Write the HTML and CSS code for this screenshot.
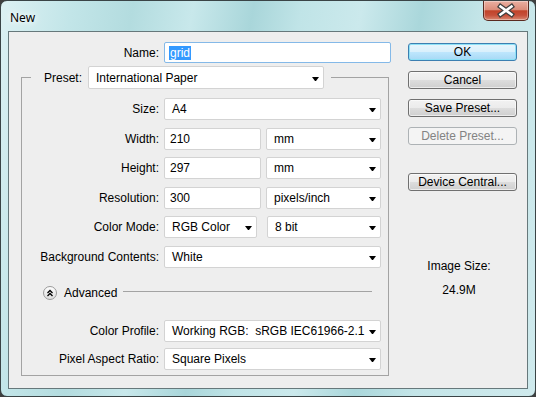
FILE: index.html
```html
<!DOCTYPE html>
<html>
  <head>
    <meta charset="utf-8">
    <title>New</title>
    <link rel="stylesheet" href="styles.css">
  </head>
  <body>
    <div class="window">
      <div class="titlebar">
        <span class="title">New</span>
        <div class="close">
          <svg width="44" height="19" viewBox="0 0 44 19">
            <path d="M16.5 5.5 L27.5 13.5 M27.5 5.5 L16.5 13.5" stroke="#3d3d3d" stroke-width="5" stroke-linecap="square"/>
            <path d="M16.5 5.5 L27.5 13.5 M27.5 5.5 L16.5 13.5" stroke="#fff" stroke-width="2.6" stroke-linecap="square"/>
          </svg>
        </div>
      </div>

      <div class="client">
        <div class="left">
          <div class="row name-row">
            <span class="lbl">Name:</span>
            <div class="field name"><span class="sel">grid</span></div>
          </div>

          <fieldset class="group">
            <legend class="preset">
              <span class="preset-lbl">Preset:</span>
              <div class="combo preset-combo">International Paper</div>
            </legend>

            <div class="rows">
              <div class="row">
                <span class="lbl">Size:</span>
                <div class="combo wide">A4</div>
              </div>
              <div class="row">
                <span class="lbl">Width:</span>
                <div class="field num">210</div>
                <div class="combo unit">mm</div>
              </div>
              <div class="row">
                <span class="lbl">Height:</span>
                <div class="field num">297</div>
                <div class="combo unit">mm</div>
              </div>
              <div class="row">
                <span class="lbl">Resolution:</span>
                <div class="field num">300</div>
                <div class="combo unit">pixels/inch</div>
              </div>
              <div class="row">
                <span class="lbl">Color Mode:</span>
                <div class="combo mode">RGB Color</div>
                <div class="combo bits">8 bit</div>
              </div>
              <div class="row">
                <span class="lbl">Background Contents:</span>
                <div class="combo wide">White</div>
              </div>
            </div>

            <div class="advanced">
              <svg class="chev" width="14" height="14" viewBox="0 0 14 14">
                <defs>
                  <linearGradient id="g" x1="0" y1="0" x2="0" y2="1">
                    <stop offset="0" stop-color="#ffffff"/>
                    <stop offset="1" stop-color="#dcdcdc"/>
                  </linearGradient>
                </defs>
                <circle cx="7" cy="7" r="6.5" fill="url(#g)" stroke="#9a9a9a"/>
                <path d="M4.5 7 L7 4.5 L9.5 7 M4.5 10 L7 7.5 L9.5 10" fill="none" stroke="#000" stroke-width="1.3"/>
              </svg>
              <span class="adv-text">Advanced</span>
              <span class="adv-line"></span>
            </div>

            <div class="rows adv-rows">
              <div class="row">
                <span class="lbl">Color Profile:</span>
                <div class="combo wide profile">Working RGB:  sRGB IEC61966-2.1</div>
              </div>
              <div class="row">
                <span class="lbl">Pixel Aspect Ratio:</span>
                <div class="combo wide">Square Pixels</div>
              </div>
            </div>
          </fieldset>
        </div>

        <div class="right">
          <div class="btn default">OK</div>
          <div class="btn">Cancel</div>
          <div class="btn">Save Preset...</div>
          <div class="btn disabled">Delete Preset...</div>
          <div class="btn device">Device Central...</div>

          <div class="info">
            <div>Image Size:</div>
            <div class="size">24.9M</div>
          </div>
        </div>
      </div>
    </div>
  </body>
</html>
```

FILE: styles.css
```css
*{
  margin: 0;
  padding: 0;
  box-sizing: border-box;
}
body{
  background-color: #3f3f3f;
  font-family: "Liberation Sans", Arial, sans-serif;
  font-size: 12px;
  color: #000;
  overflow: hidden;
}
.window{
  width: 536px;
  height: 397px;
  border: 1px solid #3a4446;
  border-radius: 7px;
  background: linear-gradient(100deg, #dcf1f3 0%, #c2e5e8 12%, #b3dcdf 22%, #c8e8eb 32%, #a9d6da 42%, #c0e4e7 50%, #cbe9ec 60%, #aad7db 70%, #c4e5e8 80%, #cfeaed 100%);
  display: flex;
  flex-direction: column;
}
.titlebar{
  height: 30px;
  display: flex;
  justify-content: space-between;
  align-items: flex-start;
  padding-left: 9px;
}
.title{
  margin-top: 10px;
  font-family: "Noto Sans", "Liberation Sans", sans-serif;
  font-size: 12px;
  line-height: 14px;
  text-shadow: 0 0 6px #fff, 0 0 10px #fff;
}
.close{
  width: 46px;
  height: 20px;
  margin-right: 6px;
  border: 1px solid #5a2a20;
  border-top: none;
  border-radius: 0 0 5px 5px;
  background: linear-gradient(#eab0a2 0%, #dc8d7a 45%, #c1432a 52%, #c6503a 75%, #d98a73 100%);
  box-shadow: inset 0 0 0 1px rgba(255,255,255,0.35);
}
.close svg{
  display: block;
}

.client{
  height: 358px;
  margin: 0 7px;
  border: 1px solid #66787b;
  background-color: #eeeeee;
  display: flex;
  padding-top: 10px;
}
.left{
  width: 382px;
}
.row{
  display: flex;
  align-items: center;
  height: 22px;
}
.lbl{
  width: 137px;
  margin-right: 5px;
  text-align: right;
  white-space: nowrap;
}
.name-row{
  height: 21px;
}
.name-row .lbl{
  width: 150px;
}

.field, .combo{
  height: 22px;
  background-color: #fff;
  border: 1px solid #d3d3d3;
  border-radius: 2px;
  display: flex;
  align-items: center;
  white-space: pre;
}
.field{
  padding-left: 5px;
}
.name{
  width: 227px;
  height: 21px;
  border-color: #84b9e8;
  padding-left: 4px;
}
.sel{
  background-color: #3399ff;
  color: #fff;
  line-height: 14px;
  padding: 0 1px;
}
.combo{
  justify-content: space-between;
  padding: 0 4px 0 7px;
}
.combo::after{
  content: "";
  width: 1px;
  height: 0;
  border-top: 4px solid #000;
  border-left: 3px solid transparent;
  border-right: 3px solid transparent;
  margin-top: 2px;
}
.wide{
  width: 217px;
}
.num{
  width: 97px;
  margin-right: 5px;
}
.unit{
  width: 115px;
}
.mode{
  width: 93px;
  margin-right: 10px;
}
.bits{
  width: 114px;
}

.group{
  margin: 3px 0 0 12px;
  width: 368px;
  border: 1px solid #a3a3a3;
  padding: 0 0 5px 0;
  min-width: 0;
}
.preset{
  margin-left: 9px;
  padding: 0 7px 0 13px;
  display: flex;
  align-items: center;
}
.preset-lbl{
  width: 37px;
  margin-right: 7px;
}
.preset-combo{
  width: 236px;
  height: 23px;
}
.rows{
  display: flex;
  flex-direction: column;
  gap: 7.5px;
  padding-top: 9px;
}
.advanced{
  display: flex;
  align-items: center;
  height: 14px;
  margin-top: 18.5px;
  padding-left: 21px;
  padding-right: 16px;
}
.chev{
  display: block;
}
.adv-text{
  margin-left: 7px;
  margin-right: 6px;
}
.adv-line{
  flex: 1;
  height: 1px;
  background-color: #a3a3a3;
  margin-bottom: 3px;
}
.adv-rows{
  gap: 6px;
  padding-top: 20px;
}

.right{
  margin-left: 17px;
  width: 109px;
  padding-top: 1px;
  display: flex;
  flex-direction: column;
}
.btn{
  height: 18px;
  margin-bottom: 10px;
  border: 1px solid #707070;
  border-radius: 3px;
  background: linear-gradient(#f2f2f2 0%, #ebebeb 50%, #dddddd 51%, #cfcfcf 100%);
  box-shadow: inset 0 0 0 1px rgba(255,255,255,0.6);
  display: flex;
  align-items: center;
  justify-content: center;
  white-space: nowrap;
}
.default{
  border-color: #3c7fb1;
  background: linear-gradient(#e8f5fc 0%, #d9f0fc 50%, #bee6fd 51%, #a7d9f5 100%);
  box-shadow: inset 0 0 0 1px #8ee1f6;
}
.disabled{
  border-color: #adb2b5;
  background: #f4f4f4;
  color: #838383;
  box-shadow: none;
}
.device{
  margin-top: 18px;
}
.info{
  margin-top: 58px;
  padding-right: 7px;
  text-align: center;
  line-height: 14px;
}
.size{
  margin-top: 10px;
}
```
